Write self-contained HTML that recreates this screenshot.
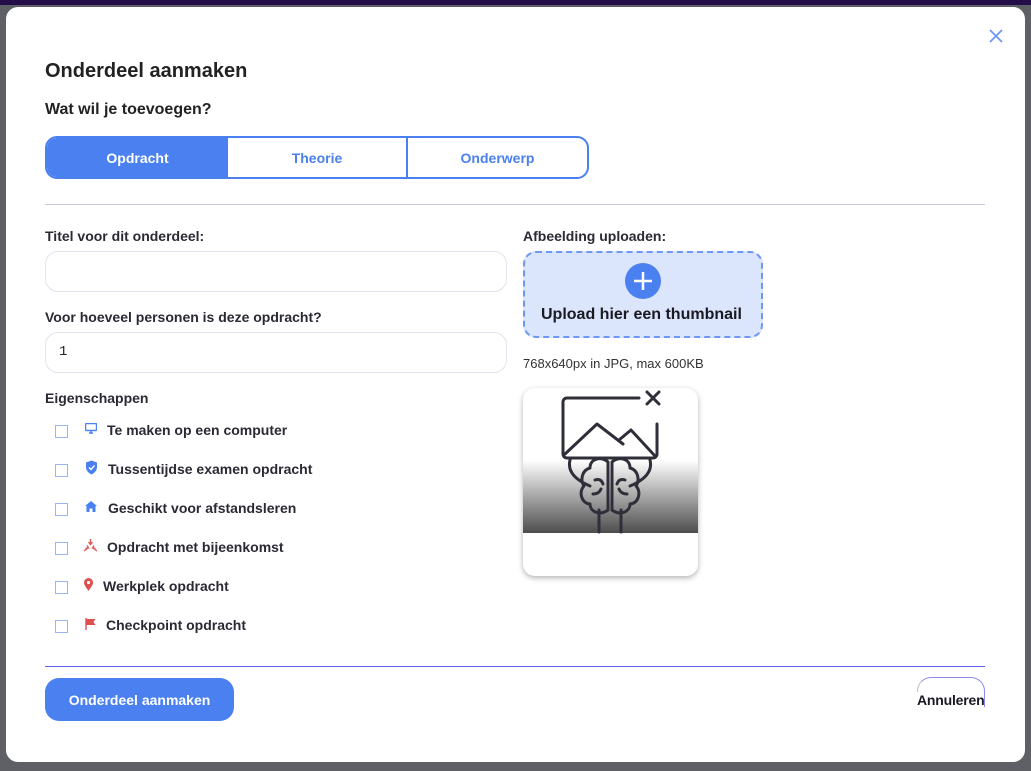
<!DOCTYPE html>
<html><head><meta charset="utf-8"><style>
*{box-sizing:border-box;margin:0;padding:0}
body{width:1031px;height:771px;background:#5f6066;position:relative;overflow:hidden;font-family:"Liberation Sans",sans-serif;color:#222}
.top{position:absolute;left:0;top:0;width:1031px;height:5px;background:#230e4a}
.m{position:absolute;left:6px;top:7px;width:1019px;height:755px;background:#fff;border-radius:12px}
.a{position:absolute;white-space:nowrap}
.lbl{font-size:14px;font-weight:bold;color:#2a2a35}
.inp{position:absolute;left:45px;width:462px;height:41px;border:1px solid #e2e2ec;border-radius:13px}
.cb{position:absolute;left:55px;width:13px;height:13px;border:1px solid #9bb3f0}
.it{position:absolute;font-size:14px;font-weight:bold;color:#2a2a35}
</style></head><body>
<div class="top"></div>
<div class="m"></div>
<svg class="a" style="left:989px;top:29px" width="14" height="14"><path d="M1 1L13 13M13 1L1 13" stroke="#6e97f5" stroke-width="1.8"/></svg>
<div class="a" style="left:45px;top:60px;font-size:20px;font-weight:bold;color:#222">Onderdeel aanmaken</div>
<div class="a" style="left:45px;top:101px;font-size:16px;font-weight:bold;color:#222">Wat wil je toevoegen?</div>
<div class="a" style="left:45px;top:136px;width:544px;height:43px;border:2px solid #4a80f0;border-radius:12px;overflow:hidden;display:flex;font-size:14px;font-weight:bold">
<div style="width:181px;background:#4a80f0;color:#fff;display:flex;align-items:center;justify-content:center">Opdracht</div>
<div style="width:180px;border-right:2px solid #4a80f0;color:#4a80f0;display:flex;align-items:center;justify-content:center">Theorie</div>
<div style="flex:1;color:#4a80f0;display:flex;align-items:center;justify-content:center">Onderwerp</div>
</div>
<div class="a" style="left:45px;top:204px;width:940px;height:1px;background:#c8c8da"></div>
<div class="a lbl" style="left:45px;top:228px">Titel voor dit onderdeel:</div>
<div class="inp" style="top:251px"></div>
<div class="a lbl" style="left:45px;top:309px">Voor hoeveel personen is deze opdracht?</div>
<div class="inp" style="top:332px"></div>
<div class="a" style="left:59px;top:344px;font-family:'Liberation Mono',monospace;font-size:14px;color:#222">1</div>
<div class="a lbl" style="left:45px;top:390px">Eigenschappen</div>

<div class="cb" style="top:425px"></div>
<svg class="a" style="left:85px;top:423px" width="12" height="11"><rect x="0.5" y="0.5" width="11" height="7" rx="1" fill="none" stroke="#4a80f0" stroke-width="1.4"/><path d="M4 10h4M6 8v2" stroke="#4a80f0" stroke-width="1.4"/></svg>
<div class="it" style="left:107px;top:422px">Te maken op een computer</div>

<div class="cb" style="top:464px"></div>
<svg class="a" style="left:85px;top:460px" width="13" height="15"><path d="M6.5 0.5L12 2.5V7C12 10.5 9.5 13 6.5 14.5 3.5 13 1 10.5 1 7V2.5Z" fill="#4a80f0"/><path d="M4 7.5l2 2 3.5-4" stroke="#fff" stroke-width="1.4" fill="none"/></svg>
<div class="it" style="left:108px;top:461px">Tussentijdse examen opdracht</div>

<div class="cb" style="top:503px"></div>
<svg class="a" style="left:85px;top:501px" width="12" height="11"><path d="M6 0L12 5H10.5V11H7.5V7.5H4.5V11H1.5V5H0Z" fill="#4a80f0"/></svg>
<div class="it" style="left:108px;top:500px">Geschikt voor afstandsleren</div>

<div class="cb" style="top:542px"></div>
<svg class="a" style="left:84px;top:539px" width="13" height="13"><path d="M6.5 0v5M4.5 3l2 2.5 2-2.5M0 12l4-3M13 12l-4-3M3 6.5l1.5 2.5-3 .5M10 6.5l-1.5 2.5 3 .5" stroke="#e05a5a" stroke-width="1.4" fill="none"/></svg>
<div class="it" style="left:107px;top:539px">Opdracht met bijeenkomst</div>

<div class="cb" style="top:581px"></div>
<svg class="a" style="left:84px;top:578px" width="9" height="13"><path d="M4.5 13C1 8 0 6.5 0 4.5a4.5 4.5 0 0 1 9 0C9 6.5 8 8 4.5 13z" fill="#e05050"/><circle cx="4.5" cy="4.5" r="1.6" fill="#fff"/></svg>
<div class="it" style="left:103px;top:578px">Werkplek opdracht</div>

<div class="cb" style="top:620px"></div>
<svg class="a" style="left:85px;top:618px" width="12" height="12"><path d="M1 0v12" stroke="#e05050" stroke-width="1.4"/><path d="M1.5 1h9l-2 3 2 3h-9z" fill="#e05050"/></svg>
<div class="it" style="left:106px;top:617px">Checkpoint opdracht</div>

<div class="a lbl" style="left:523px;top:228px">Afbeelding uploaden:</div>
<div class="a" style="left:523px;top:251px;width:240px;height:87px;background:#dbe5fb;border:2px dashed #6e97f5;border-radius:13px"></div>
<svg class="a" style="left:625px;top:263px" width="36" height="36"><circle cx="18" cy="18" r="18" fill="#4a80f0"/><path d="M18 9v18M9 18h18" stroke="#fff" stroke-width="2.5"/></svg>
<div class="a" style="left:541px;top:306px;font-size:16px;font-weight:bold;color:#1a1a22">Upload hier een thumbnail</div>
<div class="a" style="left:523px;top:356px;font-size:13px;color:#333">768x640px in JPG, max 600KB</div>

<div class="a" style="left:523px;top:388px;width:175px;height:188px;background:#fff;border-radius:12px;box-shadow:0 2px 6px rgba(0,0,0,.3);overflow:hidden">
<div style="position:absolute;left:0;top:72px;width:175px;height:73px;background:linear-gradient(#fff,#4d4d4d)"></div>
<svg style="position:absolute;left:0;top:0" width="175" height="150" fill="none" stroke="#2f2f3a" stroke-width="3" stroke-linecap="round" stroke-linejoin="round">
<path d="M116 10H44a4 4 0 0 0-4 4v52a4 4 0 0 0 4 4h86a4 4 0 0 0 4-4V36"/>
<path d="M42 66l32-30 26 20M96 52l12-10 24 26"/>
<path d="M124 4l12 12M136 4l-12 12"/>
<path d="M47 72q-4 16 20 26M127 72q4 16-20 26"/>
<path d="M85 74c-6-6-18-4-18 6-8 2-10 12-6 18-6 6-2 18 6 18 0 8 10 12 18 6z"/>
<path d="M89 74c6-6 18-4 18 6 8 2 10 12 6 18 6 6 2 18-6 18 0 8-10 12-18 6z"/>
<path d="M85 74v48M89 74v48M72 92q6-2 8 4M70 106q6 0 8-5M102 92q-6-2-8 4M104 106q-6 0-8-5"/>
<path d="M76 122v22M98 122v22"/>
</svg>
</div>

<div class="a" style="left:45px;top:666px;width:940px;height:1px;background:#6363ea"></div>
<div class="a" style="left:45px;top:678px;width:189px;height:43px;background:#4a80f0;border-radius:14px;color:#fff;font-size:14px;font-weight:bold;display:flex;align-items:center;justify-content:center">Onderdeel aanmaken</div>
<div class="a" style="left:917px;top:677px;width:68px;height:30px;border:1px solid #8a8af0;border-bottom:none;border-radius:14px 14px 0 0;border-left-color:#bbb;"></div>
<div class="a" style="left:917px;top:692px;font-size:14px;font-weight:bold;color:#1a1a22;background:#fff;letter-spacing:-0.2px">Annuleren</div>
</body></html>
